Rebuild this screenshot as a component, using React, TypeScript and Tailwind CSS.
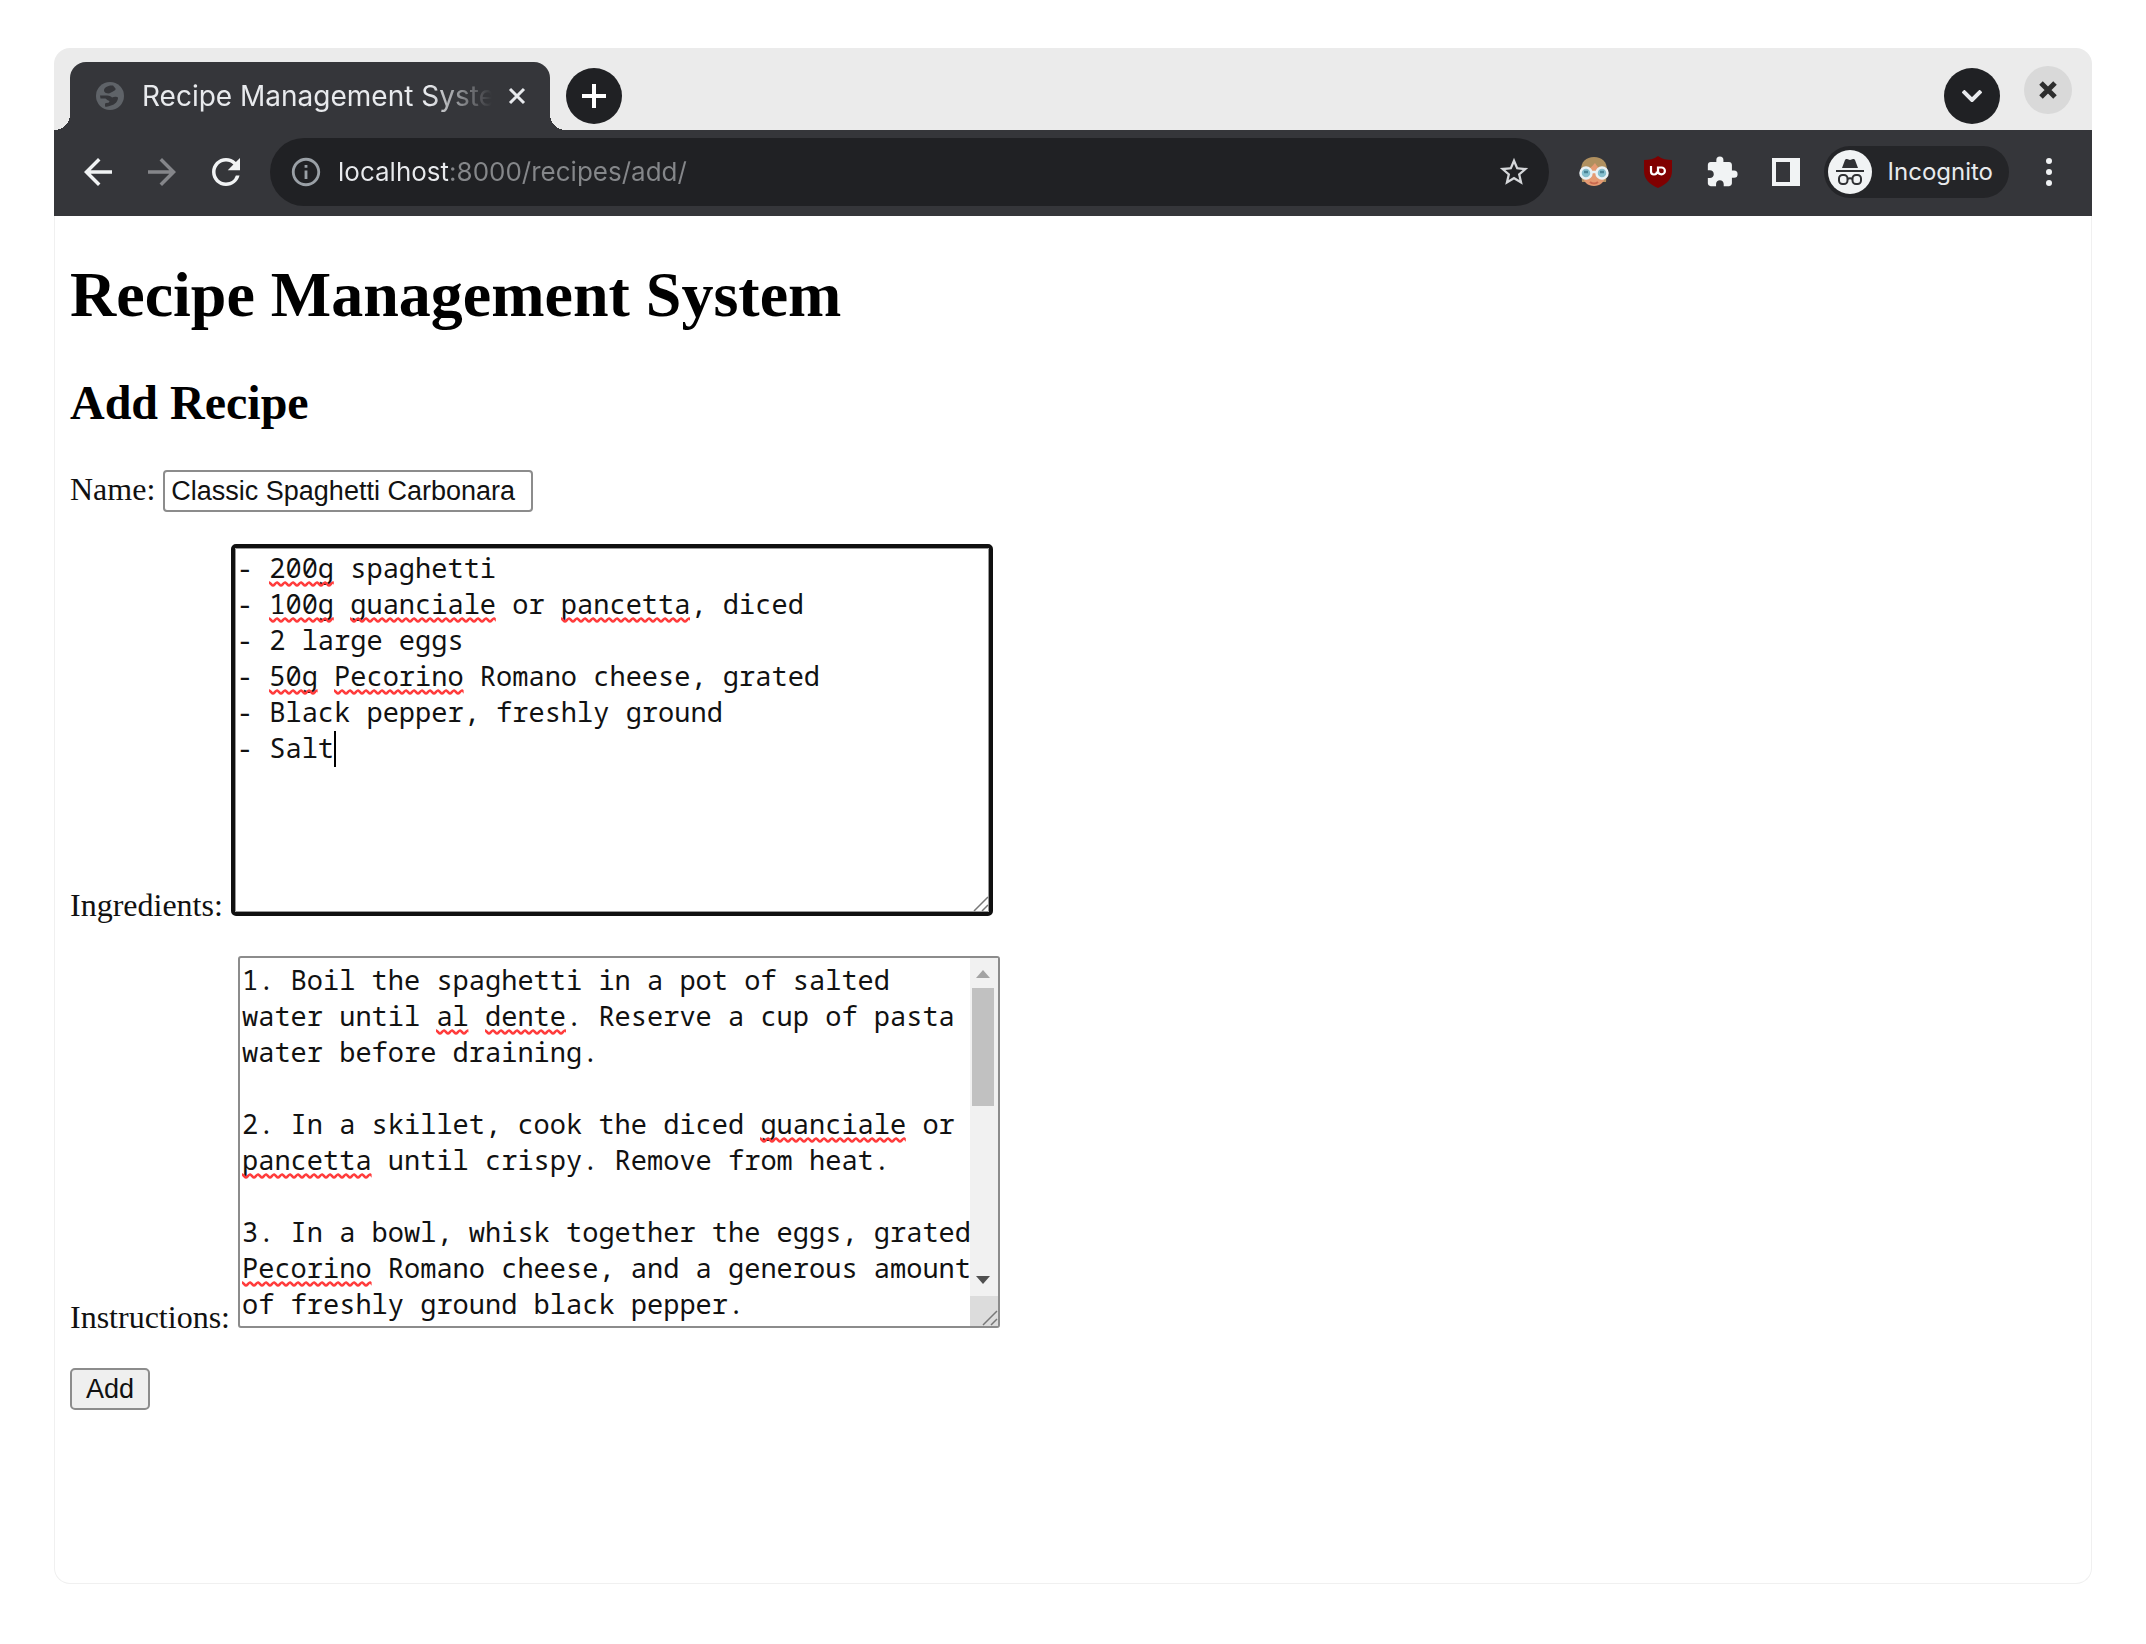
import { useState } from 'react';
import type { ReactNode } from 'react';
import { MdArrowBack, MdArrowForward, MdExtension, MdInfoOutline, MdRefresh, MdStarBorder } from 'react-icons/md';

interface Squiggle {
  row: number;
  col: number;
  length: number;
}

const INGREDIENTS = `- 200g spaghetti
- 100g guanciale or pancetta, diced
- 2 large eggs
- 50g Pecorino Romano cheese, grated
- Black pepper, freshly ground
- Salt`;

const INSTRUCTIONS = `1. Boil the spaghetti in a pot of salted
water until al dente. Reserve a cup of pasta
water before draining.

2. In a skillet, cook the diced guanciale or
pancetta until crispy. Remove from heat.

3. In a bowl, whisk together the eggs, grated
Pecorino Romano cheese, and a generous amount
of freshly ground black pepper.`;

const INGREDIENT_SQUIGGLES: Squiggle[] = [
  { row: 0, col: 2, length: 4 },
  { row: 1, col: 2, length: 4 },
  { row: 1, col: 7, length: 9 },
  { row: 1, col: 20, length: 8 },
  { row: 3, col: 2, length: 3 },
  { row: 3, col: 6, length: 8 },
];

const INSTRUCTION_SQUIGGLES: Squiggle[] = [
  { row: 1, col: 12, length: 2 },
  { row: 1, col: 15, length: 5 },
  { row: 4, col: 32, length: 9 },
  { row: 5, col: 0, length: 8 },
  { row: 8, col: 0, length: 8 },
];

const LINE_HEIGHT = 36;

function GlobeIcon() {
  return (
    <svg viewBox="0 0 28 28" className="size-7 shrink-0">
      <circle cx="14" cy="14" r="14" fill="#5f6368" />
      <path
        d="M17 3.500c-5-.5-9 2-9 5 0 2 2 3 5 3l4-2c1.500-1 3-1.500 2.500-3z M4 13.500h7c3 0 4 1 5 2 2-1 5-1 6 0 0 4-3 7-7 8-2 1-4 1.500-6 1v-3c2-1 4 0 4.500-2.500-2-.5-2.500-1.500-4-2.500H4.500z"
        fill="#35363a"
      />
    </svg>
  );
}

function CrossIcon({ className, width }: { className: string; width: number }) {
  return (
    <svg viewBox="0 0 18 18" className={className} fill="none" stroke="currentColor" strokeWidth={width}>
      <path d="M2 2l14 14M16 2L2 16" />
    </svg>
  );
}

function FaceIcon() {
  return (
    <svg viewBox="0 0 30 30" className="size-[30px]">
      <path d="M2 13C2 5 7 0 15 0s13 5 13 13l-1 12H3z" fill="#b0905f" />
      <path d="M4 14c5-1 9-4 12-8 2 4 6 7 10 8v5c0 6-5 10-11 10S4 25 4 19z" fill="#e59a72" />
      <path d="M11 25c2 2 6 2 8 0" stroke="#c9694f" strokeWidth="2" fill="none" />
      <circle cx="7" cy="16" r="5.500" fill="#86bfce" stroke="#e9f1f4" strokeWidth="2.500" />
      <circle cx="23" cy="16" r="5.500" fill="#86bfce" stroke="#e9f1f4" strokeWidth="2.500" />
      <path d="M5 15h4M21 15h4" stroke="#4a8496" strokeWidth="2.500" />
      <path d="M12 15h6" stroke="#e9f1f4" strokeWidth="2.500" />
    </svg>
  );
}

function ShieldIcon() {
  return (
    <svg viewBox="0 0 28 32" className="h-8 w-7">
      <path d="M14 0c4 3 9 4 14 4v11c0 8-5 13-14 17C5 28 0 23 0 15V4c5 0 10-1 14-4z" fill="#800000" />
      <path
        d="M7 10v5.500a3 3 0 0 0 6 0M14 11.500h3.500a3.400 3.400 0 0 1 0 6.800c-2.500 0-3.500-1.500-3.500-3.800z"
        fill="none"
        stroke="#fff"
        strokeWidth="2.200"
      />
    </svg>
  );
}

function SidePanelIcon() {
  return (
    <svg viewBox="0 0 28 28" className="size-7">
      <path d="M0 0h28v28H0z" fill="#f1f3f4" />
      <path d="M4 4h14v20H4z" fill="#35363a" />
    </svg>
  );
}

function IncognitoIcon() {
  return (
    <svg viewBox="0 0 44 44" className="size-11">
      <circle cx="22" cy="22" r="22" fill="#f1f3f4" />
      <path d="M14 18l3-8c.4-1 1.200-1.300 2-1l3 1 3-1c.8-.3 1.600 0 2 1l3 8z" fill="#303134" />
      <path d="M8 20h28v2H8z" fill="#303134" />
      <g fill="none" stroke="#303134" strokeWidth="2">
        <rect x="11" y="25" width="8.500" height="9" rx="3.500" />
        <rect x="24.500" y="25" width="8.500" height="9" rx="3.500" />
        <path d="M19.500 29c1-1 4-1 5 0" />
      </g>
    </svg>
  );
}

function TabStrip() {
  return (
    <div className="flex h-[82px] rounded-t-2xl bg-[#ebebeb]">
      <div className="flex items-end">
        <div className="size-4 bg-[radial-gradient(circle_at_top_left,transparent_16px,#35363a_16px)]" />
        <div className="flex h-[68px] w-[480px] items-center rounded-t-2xl bg-[#35363a] pl-[26px] pr-4">
          <GlobeIcon />
          <span className="ml-[18px] w-[350px] overflow-hidden whitespace-nowrap text-[28px] leading-9 text-[#e8eaed] [mask-image:linear-gradient(to_right,black_82%,transparent)]">
            Recipe Management System
          </span>
          <button aria-label="Close tab" className="ml-4 text-[#e8eaed]">
            <CrossIcon className="size-[18px]" width={3} />
          </button>
        </div>
        <div className="size-4 bg-[radial-gradient(circle_at_top_right,transparent_16px,#35363a_16px)]" />
      </div>
      <button
        aria-label="New tab"
        className="mt-5 flex size-14 items-center justify-center rounded-full bg-[#202124] text-white"
      >
        <svg viewBox="0 0 24 24" className="size-6" stroke="currentColor" strokeWidth="4">
          <path d="M12 0v24M0 12h24" />
        </svg>
      </button>
      <div className="ml-auto flex gap-6 pr-5">
        <button
          aria-label="Search tabs"
          className="mt-5 flex size-14 items-center justify-center rounded-full bg-[#202124] text-[#e8eaed]"
        >
          <svg viewBox="0 0 20 12" className="h-3 w-5" fill="none" stroke="currentColor" strokeWidth="4">
            <path d="M1 1l9 9 9-9" />
          </svg>
        </button>
        <button
          aria-label="Close window"
          className="mt-[18px] flex size-12 items-center justify-center rounded-full bg-[#d9d9d9] text-[#2e2e2e]"
        >
          <CrossIcon className="size-[18px]" width={5} />
        </button>
      </div>
    </div>
  );
}

function Toolbar() {
  const [url, setUrl] = useState('localhost:8000/recipes/add/');

  return (
    <div className="flex h-[86px] items-center bg-[#35363a] pb-0.5 pl-[23px] text-[#f1f3f4]">
      <div className="flex gap-[22px]">
        <button aria-label="Back">
          <MdArrowBack size={42} />
        </button>
        <button aria-label="Forward" className="text-[#85868a]">
          <MdArrowForward size={42} />
        </button>
        <button aria-label="Reload">
          <MdRefresh size={42} />
        </button>
      </div>
      <div className="ml-[23px] flex h-[68px] flex-1 items-center rounded-full bg-[#202124] pl-[19px] pr-[18px]">
        <MdInfoOutline size={34} className="shrink-0 text-[#9aa0a6]" />
        <input
          aria-label="Address"
          value={url}
          onChange={(e) => setUrl(e.target.value)}
          spellCheck={false}
          className="ml-[15px] min-w-0 flex-1 bg-[linear-gradient(to_right,#e8eaed_110px,#85878a_110px)] bg-clip-text text-[26px] leading-9 text-transparent outline-none"
        />
        <button aria-label="Bookmark this page" className="text-[#d5d7da]">
          <MdStarBorder size={34} />
        </button>
      </div>
      <div className="ml-7 flex items-center gap-[30px]">
        <button aria-label="Profile extension" className="flex w-[34px] justify-center">
          <FaceIcon />
        </button>
        <button aria-label="uBlock" className="flex w-[34px] justify-center">
          <ShieldIcon />
        </button>
        <button aria-label="Extensions">
          <MdExtension size={34} />
        </button>
        <button aria-label="Side panel" className="flex w-[34px] justify-center">
          <SidePanelIcon />
        </button>
      </div>
      <button className="ml-[21px] flex h-[52px] items-center gap-4 rounded-full bg-[#242528] pl-1 pr-4 text-[24px] text-[#e8eaed]">
        <IncognitoIcon />
        Incognito
      </button>
      <button aria-label="Menu" className="ml-[26px] mr-[29px] flex w-7 justify-center">
        <svg viewBox="0 0 6 28" className="h-7 w-1.5" fill="currentColor">
          <circle cx="3" cy="3" r="3" />
          <circle cx="3" cy="14" r="3" />
          <circle cx="3" cy="25" r="3" />
        </svg>
      </button>
    </div>
  );
}

// Red spell-check waves, placed on the character grid of the text area
function Squiggles({ id, items }: { id: string; items: Squiggle[] }) {
  return (
    <>
      {items.map((s) => (
        <svg
          key={`${s.row}-${s.col}`}
          className="absolute h-1.5"
          style={{ left: `${s.col}ch`, top: s.row * LINE_HEIGHT + 30, width: `${s.length}ch` }}
        >
          <defs>
            <pattern id={`${id}-${s.row}-${s.col}`} width="8" height="6" patternUnits="userSpaceOnUse">
              <path d="M-2 2C0 1 0 1 2 3S4 5 6 3 8 1 10 3" fill="none" stroke="#ff3b3b" strokeWidth="2.500" />
            </pattern>
          </defs>
          <rect width="100%" height="6" fill={`url(#${id}-${s.row}-${s.col})`} />
        </svg>
      ))}
    </>
  );
}

function Grip() {
  return (
    <svg viewBox="0 0 16 16" className="size-4" stroke="#777" strokeWidth="1.500">
      <path d="M1 15L15 1M9 15l6-6" />
    </svg>
  );
}

function ScrollBar() {
  return (
    <div aria-hidden="true" className="flex w-7 shrink-0 flex-col bg-[#f1f1f1]">
      <svg viewBox="0 0 28 30" className="h-[30px] w-7">
        <path d="M6 20l7-8 7 8z" fill="#a3a3a3" />
      </svg>
      <div className="ml-0.5 mr-1 h-[118px] bg-[#c1c1c1]" />
      <svg viewBox="0 0 28 30" className="mt-auto h-[30px] w-7">
        <path d="M6 10h14l-7 8z" fill="#505050" />
      </svg>
      <div className="flex h-[30px] items-end justify-end bg-[#dcdcdc]">
        <Grip />
      </div>
    </div>
  );
}

function Field({ id, label, children }: { id: string; label: string; children: ReactNode }) {
  return (
    <div className="mb-8 flex items-end gap-2">
      <label htmlFor={id} className="leading-[37px]">
        {label}
      </label>
      {children}
    </div>
  );
}

function RecipeForm() {
  const [name, setName] = useState('Classic Spaghetti Carbonara');
  const [ingredients, setIngredients] = useState(INGREDIENTS);
  const [instructions, setInstructions] = useState(INSTRUCTIONS);

  return (
    <form onSubmit={(e) => e.preventDefault()} className="text-[32px] text-[#111]">
      <div className="mb-8 flex items-baseline gap-2">
        <label htmlFor="name" className="leading-[37px]">
          Name:
        </label>
        <input
          id="name"
          value={name}
          onChange={(e) => setName(e.target.value)}
          spellCheck={false}
          className="h-[42px] w-[370px] rounded-[4px] border-2 border-[#8c8c8c] px-1.5 font-['Liberation_Sans',Arial,sans-serif] text-[27px]"
        />
      </div>

      <Field id="ingredients" label="Ingredients:">
        <div className="relative mb-2 h-[372px] w-[762px] rounded-[5px] border-4 border-[#101010] font-['Noto_Sans_Mono','DejaVu_Sans_Mono',monospace] text-[27px] leading-9 outline-1 -outline-offset-5 outline-[#999]">
          <textarea
            id="ingredients"
            value={ingredients}
            onChange={(e) => setIngredients(e.target.value)}
            spellCheck={false}
            className="block size-full resize-none overflow-hidden px-0.5 py-0.5 outline-none"
          />
          <div aria-hidden="true" className="pointer-events-none absolute left-0.5 top-[3px]">
            <Squiggles id="ing" items={INGREDIENT_SQUIGGLES} />
            <div className="absolute left-[6ch] top-[180px] h-9 w-0.5 bg-black" />
          </div>
          <div className="pointer-events-none absolute bottom-0 right-0">
            <Grip />
          </div>
        </div>
      </Field>

      <Field id="instructions" label="Instructions:">
        <div className="relative mb-2 flex h-[372px] w-[762px] rounded-[3px] border-2 border-[#8c8c8c] font-['Noto_Sans_Mono','DejaVu_Sans_Mono',monospace] text-[27px] leading-9">
          <textarea
            id="instructions"
            value={instructions}
            onChange={(e) => setInstructions(e.target.value)}
            spellCheck={false}
            className="block h-full min-w-0 flex-1 resize-none overflow-hidden whitespace-pre pl-0.5 pt-1 outline-none"
          />
          <ScrollBar />
          <div aria-hidden="true" className="pointer-events-none absolute left-0.5 top-[5px]">
            <Squiggles id="ins" items={INSTRUCTION_SQUIGGLES} />
          </div>
        </div>
      </Field>

      <button
        type="submit"
        className="block h-[42px] w-20 rounded-[5px] border-2 border-[#8c8c8c] bg-[#efefef] font-['Liberation_Sans',Arial,sans-serif] text-[27px] leading-9"
      >
        Add
      </button>
    </form>
  );
}

export default function App() {
  return (
    <div className="flex min-h-screen flex-col bg-white px-[54px] pb-[60px] pt-12 font-['Inter',sans-serif]">
      <TabStrip />
      <Toolbar />
      <main className="flex-1 rounded-b-2xl border border-t-0 border-[#f0f0f0] px-[15px] pt-[42px] font-['Liberation_Serif','Times_New_Roman',serif] text-black">
        <h1 className="mb-11 text-[64px] font-bold leading-[74px]">Recipe Management System</h1>
        <h2 className="mb-10 text-[48px] font-bold leading-[54px]">Add Recipe</h2>
        <RecipeForm />
      </main>
    </div>
  );
}
